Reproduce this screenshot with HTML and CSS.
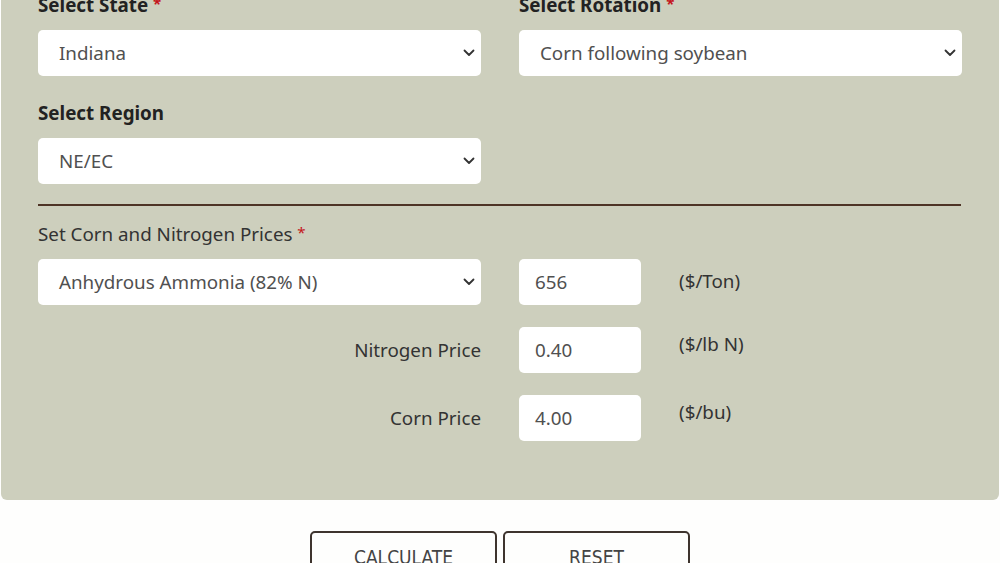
FILE: index.html
```html
<!DOCTYPE html>
<html lang="en">
<head>
<meta charset="utf-8">
<title>Nitrogen Rate Calculator</title>
<link rel="stylesheet" href="styles.css">
</head>
<body>
<div class="panel">
  <div class="row two">
    <div class="field">
      <label class="lbl bold">Select State <span class="req">*</span></label>
      <div class="sel"><span class="sel-text">Indiana</span><svg class="chev" viewBox="0 0 12 8" width="12" height="8"><path d="M1.5 1.5 L6 6 L10.5 1.5" fill="none" stroke="#333" stroke-width="1.8" stroke-linecap="round" stroke-linejoin="round"/></svg></div>
    </div>
    <div class="field">
      <label class="lbl bold">Select Rotation <span class="req">*</span></label>
      <div class="sel"><span class="sel-text">Corn following soybean</span><svg class="chev" viewBox="0 0 12 8" width="12" height="8"><path d="M1.5 1.5 L6 6 L10.5 1.5" fill="none" stroke="#333" stroke-width="1.8" stroke-linecap="round" stroke-linejoin="round"/></svg></div>
    </div>
  </div>
  <div class="row two gap-top">
    <div class="field">
      <label class="lbl bold">Select Region</label>
      <div class="sel"><span class="sel-text">NE/EC</span><svg class="chev" viewBox="0 0 12 8" width="12" height="8"><path d="M1.5 1.5 L6 6 L10.5 1.5" fill="none" stroke="#333" stroke-width="1.8" stroke-linecap="round" stroke-linejoin="round"/></svg></div>
    </div>
  </div>
  <hr class="divider">
  <label class="lbl normal prices-lbl">Set Corn and Nitrogen Prices <span class="req">*</span></label>
  <div class="prices">
    <div class="price-row">
      <div class="sel"><span class="sel-text">Anhydrous Ammonia (82% N)</span><svg class="chev" viewBox="0 0 12 8" width="12" height="8"><path d="M1.5 1.5 L6 6 L10.5 1.5" fill="none" stroke="#333" stroke-width="1.8" stroke-linecap="round" stroke-linejoin="round"/></svg></div>
      <div class="inp">656</div>
      <div class="unit">($/Ton)</div>
    </div>
    <div class="price-row">
      <div class="row-lbl">Nitrogen Price</div>
      <div class="inp">0.40</div>
      <div class="unit high">($/lb N)</div>
    </div>
    <div class="price-row">
      <div class="row-lbl">Corn Price</div>
      <div class="inp">4.00</div>
      <div class="unit high">($/bu)</div>
    </div>
  </div>
</div>
<div class="actions">
  <button class="btn">CALCULATE</button>
  <button class="btn">RESET</button>
</div>
</body>
</html>
```
FILE: styles.css
```css
html, body {
  margin: 0;
  padding: 0;
  background: #fefefd;
}
body {
  font-family: "Noto Sans", "Open Sans", sans-serif;
  color: #333;
  overflow: hidden;
}
.panel {
  margin: -22px 1px 0 1px;
  background: #cdcfbd;
  border-radius: 0 0 6px 6px;
  padding: 13px 38px 59px 37px;
}
.row.two {
  display: grid;
  grid-template-columns: 443px 443px;
  column-gap: 38px;
}
.gap-top {
  margin-top: 25px;
}
.field {
  display: flex;
  flex-direction: column;
}
.lbl {
  display: block;
  font-size: 18.8px;
  line-height: 24px;
  margin-bottom: 13px;
}
.bold {
  font-weight: 700;
  color: #222;
}
.normal {
  font-weight: 400;
  color: #333;
}
.prices-lbl {
  margin-bottom: 13px;
}
.req {
  color: #c4161c;
  font-size: 15px;
  vertical-align: 3px;
}
.sel {
  position: relative;
  height: 46px;
  background: #fff;
  border-radius: 5px;
  display: flex;
  align-items: center;
  padding-left: 21px;
  box-sizing: border-box;
  font-size: 18.8px;
  color: #505050;
}
.chev {
  position: absolute;
  right: 6px;
  top: 19px;
}
.divider {
  border: 0;
  border-top: 2px solid #4e3426;
  margin: 20px 0 14px 0;
  height: 0;
}
.prices {
  display: flex;
  flex-direction: column;
  gap: 22px;
}
.price-row {
  display: grid;
  grid-template-columns: 443px 122px auto;
  column-gap: 38px;
  align-items: center;
}
.row-lbl {
  text-align: right;
  font-size: 18.8px;
  color: #333;
}
.inp {
  height: 46px;
  background: #fff;
  border-radius: 5px;
  display: flex;
  align-items: center;
  padding-left: 16px;
  box-sizing: border-box;
  font-size: 18.8px;
  color: #505050;
}
.unit {
  font-size: 18.8px;
  color: #333;
  margin-bottom: 2px;
}
.unit.high {
  margin-bottom: 12px;
}
.actions {
  display: flex;
  justify-content: center;
  gap: 6px;
  margin-top: 31px;
}
.btn {
  width: 187px;
  height: 46px;
  background: #fefefd;
  border: 2px solid #3e342e;
  border-radius: 5px;
  font-family: "DejaVu Sans Condensed", "Liberation Sans Narrow", "Roboto", sans-serif;
  font-stretch: condensed;
  font-size: 19px;
  color: #444;
  padding: 13px 0 0 0;
  display: flex;
  justify-content: center;
  align-items: flex-start;
}
```
